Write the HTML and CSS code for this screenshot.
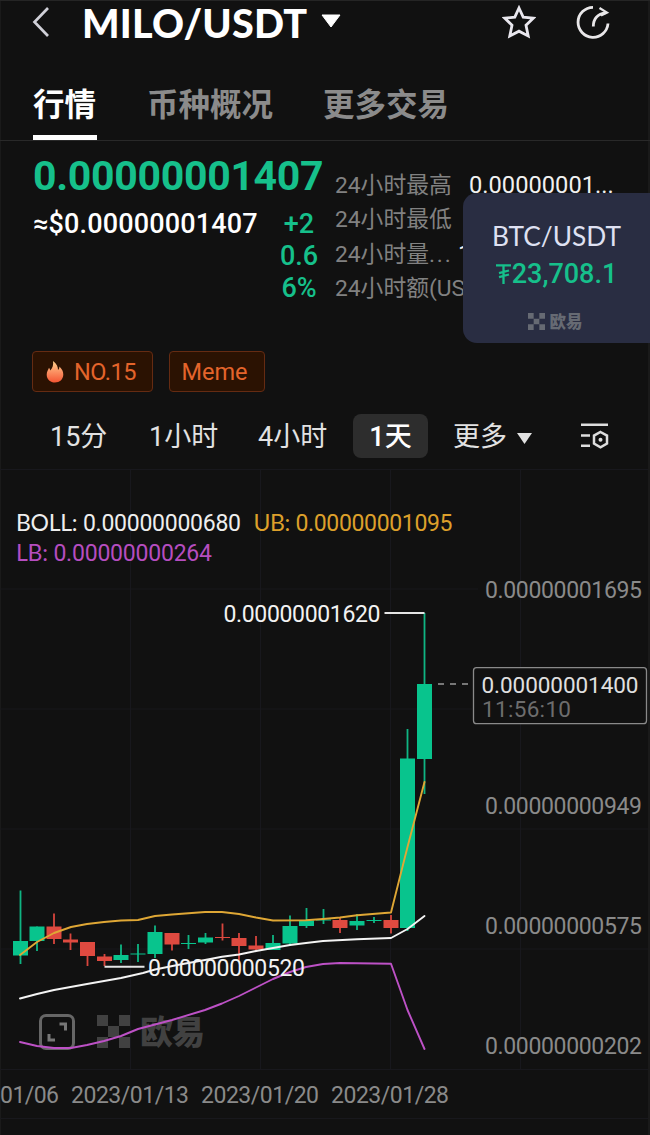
FILE: index.html
```html
<!DOCTYPE html>
<html lang="zh-CN">
<head>
<meta charset="utf-8">
<title>MILO/USDT</title>
<link rel="stylesheet" href="styles.css">
</head>
<body>
<div class="app">
  <header class="header">
    <svg class="back" width="18" height="32" viewBox="0 0 18 32"><path d="M16 2 2.5 16 16 30" fill="none" stroke="#d0d0d8" stroke-width="2.7"/></svg>
    <h1 class="title">MILO/USDT</h1>
    <svg class="caret" width="20" height="14" viewBox="0 0 20 14"><path d="M1 1H19L10 13Z" fill="#fff" stroke="#fff" stroke-linejoin="round"/></svg>
    <div class="header-icons">
      <svg width="34" height="34" viewBox="0 0 34 34"><path d="M17 3 21.2 12.1 31.2 13.2 24 20.2 26.2 31 17 26.2 7.8 31 10 20.2 2.8 13.2 12.8 12.1Z" fill="none" stroke="#e9e7ee" stroke-width="2.8"/></svg>
      <svg width="34" height="34" viewBox="0 0 34 34"><g fill="none" stroke="#e9e7e9" stroke-width="2.8"><path d="M17 2.3A15 15 0 1 0 32 18.5"/><path d="M17.3 21.5C17.3 14 21 9 30 7.6"/><path d="M23.5 3 31 7.6 25 10.6" stroke-width="2.2"/></g></svg>
    </div>
  </header>

  <nav class="tabs">
    <span class="tab active">行情</span>
    <span class="tab">币种概况</span>
    <span class="tab">更多交易</span>
  </nav>

  <section class="quote">
    <div class="quote-main">
      <div class="price">0.00000001407</div>
      <div class="sub">
        <span class="fiat">≈$0.00000001407</span>
        <span class="change">+2<br>0.6<br>6%</span>
      </div>
    </div>
    <div class="stats">
      <div class="stat"><span>24小时最高</span><b>0.00000001...</b></div>
      <div class="stat"><span>24小时最低</span></div>
      <div class="stat"><span>24小时量<i>...</i></span><b class="tight">1</b></div>
      <div class="stat"><span>24小时额(US</span></div>
    </div>
    <aside class="floating">
      <div class="pair">BTC/USDT</div>
      <div class="pair-price"><svg width="15" height="20" viewBox="0 0 15 20"><path d="M0 1.3H15M7.5 1.3V20M3 9.2 13 6.5M3 13.2 13 10.5" fill="none" stroke="#16c08b" stroke-width="2.3"/></svg>23,708.1</div>
      <div class="brand"><svg width="17" height="17" viewBox="0 0 33 33"><path d="M0 0h11v11H0zM22 0h11v11H22zM11 11h11v11H11zM0 22h11v11H0zM22 22h11v11H22z" fill="#666a73"/></svg>欧易</div>
    </aside>
  </section>

  <div class="tags">
    <span class="tag rank"><svg width="18" height="22" viewBox="0 0 18 22"><defs><linearGradient id="fire" x1="0" y1="0" x2="0" y2="1"><stop offset="0" stop-color="#ffd08a"/><stop offset=".5" stop-color="#fb9263"/><stop offset="1" stop-color="#f45532"/></linearGradient></defs><path d="M7 0C11 3 12 6 12 9C13 8 13.5 7 13.4 5.5C16 8 17.3 10.5 17.3 13.5C17.3 18.5 13.5 21.5 9 21.5S.7 18.5.7 13.7C.7 10.5 2.3 8.7 3 6.8C3.8 8 4 8.6 4.2 9.6C6.7 7 7.6 4 7 0Z" fill="url(#fire)"/></svg>NO.15</span>
    <span class="tag meme">Meme</span>
  </div>

  <nav class="frames">
    <span class="frame f15">15分</span>
    <span class="frame f1h">1小时</span>
    <span class="frame f4h">4小时</span>
    <span class="frame day">1天</span>
    <span class="frame more">更多<svg width="15" height="11" viewBox="0 0 15 11"><path d="M0 0H15L7.5 11Z" fill="#e2e2e2"/></svg></span>
    <svg class="settings" width="28" height="28" viewBox="0 0 28 28"><g fill="none" stroke="#dedede" stroke-width="2.5"><path d="M0 2.8H27M0 13.4H9M0 23.8H9"/><path d="M19.5 10 26 13.6V21.6L19.5 25.4 13 21.6V13.6Z"/></g><circle cx="19.5" cy="17.7" r="2" fill="#dedede"/></svg>
  </nav>

  <svg class="chart" width="650" height="667" viewBox="0 468 650 667">
    <path class="grid" d="M0 469.5H648M0 589H478M0 709H472M0 829H648M0 949H648M0 1069.5H648M0 1118.5H648M130.5 470V1069M260.5 470V1069M390.5 470V1069M520.5 470V1069"/>

    <g class="watermark">
      <rect x="40.5" y="1015.5" width="33" height="33" rx="5.5" fill="none" stroke="#666" stroke-width="3"/>
      <path d="M59.5 1024H65.500V1030.500M49 1034V1040H55" fill="none" stroke="#777" stroke-width="3"/>
      <path d="M97 1015h11v11H97zM119 1015h11v11H119zM108 1026h11v11H108zM97 1037h11v11H97zM119 1037h11v11H119z" fill="#414141"/>
      <text x="140" y="1043.500" class="wm" textLength="65">欧易</text>
    </g>

    <g class="up">
      <path class="wick" d="M20.500 890.500V964M37 926.500V951M121 944.500V963M138 944V962M155 925.500V958M188.500 935V949M205.500 933V944M273 935V950M290 915.500V946M306.500 908V928M323.500 909V924M357 914V930M374 917V923M407.500 729V931M424.500 613V794"/>
      <path class="body" d="M13 941h15v14.500h-15zM29.500 926.500h15v14.500h-15zM113.500 955h15v5h-15zM130.500 953.500h15v1h-15zM147.500 932h15v22h-15zM181 943h15v1h-15zM198 937.500h15v5h-15zM265.500 943h15v7h-15zM282.500 926h15v17.500h-15zM299 920.500h15v5.500h-15zM316 919.500h15v1h-15zM349.500 921h15v4.500h-15zM366.500 920h15v1h-15zM400 758.500h15V928h-15zM417 684h15v75h-15z"/>
    </g>
    <g class="down">
      <path class="wick" d="M54 913.500V944M70.500 933.500V950M87.500 942V966M104.500 954V966M172 933V950.500M222.500 923.500V940.500M239 933V960M256 936V951M340 918V933M391 915V933.500"/>
      <path class="body" d="M46.500 926.500h15v12.500h-15zM63 939.500h15v3h-15zM80 942h15v14h-15zM97 956.500h15v4.500h-15zM164.500 933h15v11.500h-15zM215 937h15v1h-15zM231.500 938h15v8h-15zM248.500 945.500h15v4h-15zM332.500 920h15v8h-15zM383.500 920h15v8h-15z"/>
    </g>

    <polyline class="line ub" points="20,955 37,942 54,933 71,927 87,924 104,922 121,920.500 138,920 155,916 172,914.500 205,912 222,912 239,914 256,917.500 273,920.500 306,920.200 323,919 340,917.500 357,915.300 391,912.500 407.500,847 424.500,782"/>
    <polyline class="line mb" points="20,998.500 37,994 54,990 87,984 121,978 143,973 155,969.500 180,964.500 205,960 222,956.800 239,954.500 256,951 273,948 290,945 306,943 323,941 357,939.300 391,938 407.500,929 424.500,916"/>
    <polyline class="line lb" points="20,1042 37,1046 54,1048 71,1048 87,1045 104,1041 121,1036 138,1029 155,1024.500 172,1020 205,1010 222,1003.500 239,996 256,987.500 273,979 290,972 306,967 323,964 340,963 391,963.700 407.500,1010 424.500,1049"/>

    <path d="M384.500 613H424.500M104.500 966.800H144.500" stroke="#e5e5e5" stroke-width="2"/>
    <path d="M438 684H470" stroke="#999" stroke-width="1.500" stroke-dasharray="6 6"/>

    <g class="legend">
      <text x="16" y="531" textLength="225" fill="#eee"><tspan class="lat">BOLL: </tspan>0.00000000680</text>
      <text x="253.500" y="531" textLength="199" fill="#dda02b"><tspan class="lat">UB: </tspan>0.00000001095</text>
      <text x="16" y="561" textLength="196" fill="#b64dc0"><tspan class="lat">LB: </tspan>0.00000000264</text>
      <text x="223.500" y="621.500" textLength="157" fill="#f2f2f2">0.00000001620</text>
      <text x="148" y="975.500" textLength="157" fill="#f2f2f2">0.00000000520</text>
    </g>

    <g class="axis">
      <text x="485" y="598" textLength="157">0.00000001695</text>
      <text x="485" y="814" textLength="157">0.00000000949</text>
      <text x="485" y="933.500" textLength="157">0.00000000575</text>
      <text x="485" y="1054" textLength="157">0.00000000202</text>
      <text x="0" y="1102.500" textLength="59">01/06</text>
      <text x="71" y="1102.500" textLength="118">2023/01/13</text>
      <text x="201" y="1102.500" textLength="118">2023/01/20</text>
      <text x="331" y="1102.500" textLength="118">2023/01/28</text>
    </g>

    <rect x="473.500" y="667.700" width="173" height="56" rx="3" fill="#111" stroke="#8a8a8a" stroke-width="1.300"/>
    <g class="last">
      <text x="481.500" y="692.500" textLength="157" fill="#e0e0e0">0.00000001400</text>
      <text x="482" y="716.500" textLength="89" fill="#6d6d6d">11:56:10</text>
    </g>
  </svg>
</div>
</body>
</html>
```
FILE: styles.css
```css
* { box-sizing: border-box; }
body {
  margin: 0;
  background: #111;
  color: #fff;
  font-family: Roboto, "Noto Sans CJK SC", sans-serif;
}
.app {
  width: 650px;
  height: 1135px;
  overflow: hidden;
  background: #111;
  border-top: 1px solid #252525;
  box-shadow: inset -2px 0 #1a1a1a, inset 1px 0 #1a1a1a;
  display: flex;
  flex-direction: column;
}
svg { display: block; flex: none; }

.header {
  height: 43px;
  padding-left: 32px;
  display: flex;
  align-items: center;
}
.back { margin-top: -2px; }
.title {
  margin: 0 0 0 32px;
  width: 228px;
  font: 900 39.500px/40px Lato, sans-serif;
  letter-spacing: 0.2px;
  white-space: nowrap;
}
.caret { margin: -4px 0 0 11px; }
.header-icons { display: flex; gap: 40px; margin: -2px 0 0 auto; padding-right: 40px; }

.tabs {
  height: 97px;
  padding: 33px 0 0 33px;
  display: flex;
  border-bottom: 1px solid #292929;
}
.tab {
  height: 63px;
  font: 700 31.5px/50px "Noto Sans CJK SC", sans-serif;
  color: #8b8b8b;
  margin-right: 50px;
  white-space: nowrap;
}
.tab.active { color: #fff; border-bottom: 5px solid #fff; width: 64px; margin-right: 50px; }

.quote {
  position: relative;
  height: 210px;
  padding-left: 33px;
  display: flex;
}
.quote-main { width: 302px; padding-top: 11px; }
.price {
  font-size: 41px;
  line-height: 48px;
  font-weight: 700;
  letter-spacing: -0.3px;
  color: #16c08b;
  white-space: nowrap;
}
.sub { display: flex; padding-top: 8px; font-weight: 500; font-size: 27px; line-height: 32px; }
.fiat { width: 234px; letter-spacing: 0.15px; white-space: nowrap; }
.change { width: 64px; text-align: center; color: #16c08b; }
.stats { padding-top: 28px; }
.stat { height: 34.400px; display: flex; font-size: 22.800px; line-height: 34px; color: #818181; white-space: nowrap; }
.stat span { width: 134px; }
.stat i { font-style: normal; letter-spacing: 1.8px; }
.stat b { font-weight: 400; font-size: 23.700px; line-height: 32px; color: #f0f0f0; }
.stat .tight { margin-left: -11px; }

.floating {
  position: absolute;
  left: 463px;
  top: 52px;
  width: 187px;
  height: 150px;
  padding-top: 26px;
  border-radius: 14px 0 0 14px;
  background: #292d42;
  display: flex;
  flex-direction: column;
  align-items: center;
}
.pair { font: 400 26.300px/34px Lato, sans-serif; color: #dfe1f2; }
.pair-price { display: flex; align-items: center; gap: 1px; font-size: 27px; font-weight: 500; line-height: 42px; color: #16c08b; }
.brand { display: flex; gap: 5px; align-items: center; margin-top: 14px; margin-right: 3px; font: 900 16.500px/24px "Noto Sans CJK SC", sans-serif; color: #666a73; }

.tags { height: 40px; padding-left: 32px; display: flex; gap: 16px; }
.tag {
  height: 41px;
  border: 1px solid #652b12;
  border-radius: 4px;
  background: #2b1202;
  color: #e4642b;
  font-size: 23.500px;
  line-height: 42px;
  display: flex;
  align-items: center;
  justify-content: center;
}
.rank { width: 121px; padding-right: 3px; gap: 10px; letter-spacing: -0.5px; }
.meme { width: 96px; padding-right: 5px; }

.frames { height: 77px; padding: 23px 0 0 50px; display: flex; color: #e2e2e2; font-size: 27px; line-height: 46px; }
.frame { white-space: nowrap; }
.f15 { width: 99px; }
.f1h { width: 109px; }
.f4h { width: 95px; }
.day { width: 75px; height: 44px; border-radius: 8px; background: #2d2d2d; color: #fff; text-align: center; font-weight: 500; }
.more { margin-left: 25px; width: 128px; display: flex; gap: 10px; }
.more svg { margin-top: 19px; }
.settings { margin-top: 8px; }

.chart { font-family: Roboto, "Noto Sans CJK SC", sans-serif; }
.grid { fill: none; stroke: #18181d; stroke-width: 1; }
.wm { font: 900 33px "Noto Sans CJK SC", sans-serif; fill: #414141; }
.up .wick { stroke: #0fb583; stroke-width: 1.800; }
.up .body { fill: #08c48d; }
.down .wick { stroke: #d8453d; stroke-width: 1.800; }
.down .body { fill: #df4a40; }
.line { fill: none; stroke-width: 1.900; stroke-linejoin: round; stroke-linecap: round; }
.ub { stroke: #dfa735; }
.mb { stroke: #f4f4f4; }
.lb { stroke: #bd51c6; }
.legend text, .axis text { font-size: 23px; }
.last text { font-size: 22.500px; }
.legend .lat { font-family: Lato, sans-serif; }
.axis text { fill: #8a8a8a; }
```
